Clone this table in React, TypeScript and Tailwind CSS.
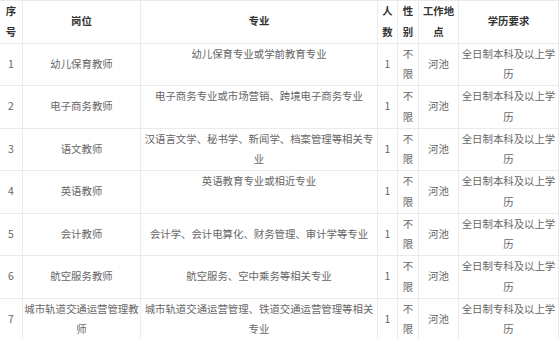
import React from "react";

type Row = {
  no: string;
  pos: string;
  major: string;
  majorAlign: "top" | "middle";
  edu: string;
};

const rows: Row[] = [
  { no: "1", pos: "幼儿保育教师", major: "幼儿保育专业或学前教育专业", majorAlign: "top", edu: "全日制本科及以上学历" },
  { no: "2", pos: "电子商务教师", major: "电子商务专业或市场营销、跨境电子商务专业", majorAlign: "top", edu: "全日制本科及以上学历" },
  { no: "3", pos: "语文教师", major: "汉语言文学、秘书学、新闻学、档案管理等相关专业", majorAlign: "top", edu: "全日制本科及以上学历" },
  { no: "4", pos: "英语教师", major: "英语教育专业或相近专业", majorAlign: "top", edu: "全日制本科及以上学历" },
  { no: "5", pos: "会计教师", major: "会计学、会计电算化、财务管理、审计学等专业", majorAlign: "middle", edu: "全日制本科及以上学历" },
  { no: "6", pos: "航空服务教师", major: "航空服务、空中乘务等相关专业", majorAlign: "middle", edu: "全日制专科及以上学历" },
  { no: "7", pos: "城市轨道交通运营管理教师", major: "城市轨道交通运营管理、铁道交通运营管理等相关专业", majorAlign: "top", edu: "全日制专科及以上学历" },
];

const td = "border border-[#ebebeb] px-[1px] text-center align-middle";

export default function App() {
  return (
    <div
      className="w-[560px] h-[339px] overflow-hidden bg-white text-[10.4px] leading-[20.75px] text-[#666]"
      style={{ fontFamily: '"Noto Sans CJK SC", "Microsoft YaHei", sans-serif' }}
    >
      <table className="table-fixed border-collapse w-[559px] -ml-[1px]">
        <colgroup>
          <col className="w-[23px]" />
          <col className="w-[118px]" />
          <col className="w-[237px]" />
          <col className="w-[20px]" />
          <col className="w-[21px]" />
          <col className="w-[40px]" />
          <col className="w-[100px]" />
        </colgroup>
        <thead>
          <tr className="text-[#333] font-bold">
            <th className={td}>序号</th>
            <th className={td}>岗位</th>
            <th className={td}>专业</th>
            <th className={td}>人数</th>
            <th className={td}>性别</th>
            <th className={td}>工作地点</th>
            <th className={td}>学历要求</th>
          </tr>
        </thead>
        <tbody>
          {rows.map((r) => (
            <tr key={r.no}>
              <td className={td}>{r.no}</td>
              <td className={td}>{r.pos}</td>
              <td
                className={
                  r.majorAlign === "top"
                    ? "border border-[#ebebeb] px-[1px] text-center align-top"
                    : "border border-[#ebebeb] px-[1px] text-center align-middle"
                }
              >
                {r.major}
              </td>
              <td className={td}>1</td>
              <td className={td}>不限</td>
              <td className={td}>河池</td>
              <td className={td}>{r.edu}</td>
            </tr>
          ))}
        </tbody>
      </table>
    </div>
  );
}
